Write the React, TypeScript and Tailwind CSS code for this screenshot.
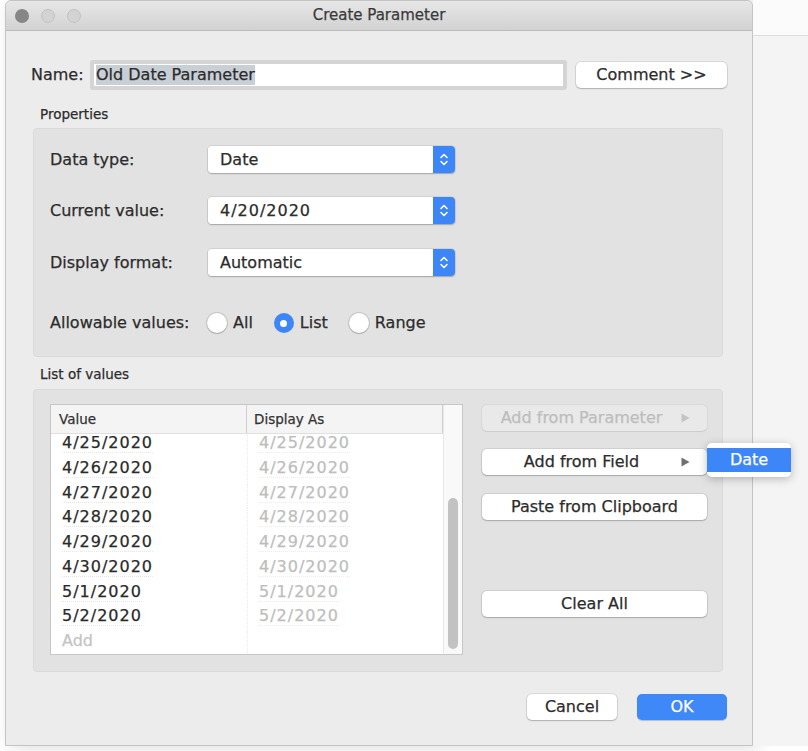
import { ReactNode } from "react";

const values = [
  "4/25/2020",
  "4/26/2020",
  "4/27/2020",
  "4/28/2020",
  "4/29/2020",
  "4/30/2020",
  "5/1/2020",
  "5/2/2020",
];

// blue up/down stepper on the right side of a popup select
function Stepper() {
  return (
    <div className="w-[22px] h-full bg-[#3d86f7] rounded-r-[4px] flex items-center justify-center">
      <svg width="10" height="17" viewBox="0 0 10 17" fill="none" stroke="white" strokeWidth="1.6" strokeLinecap="round" strokeLinejoin="round">
        <path d="M2 6.5 L5 3.5 L8 6.5" />
        <path d="M2 10.5 L5 13.5 L8 10.5" />
      </svg>
    </div>
  );
}

function Select({ children }: { children: ReactNode }) {
  return (
    <div className="flex w-[247px] h-[27px] rounded-[4px] shadow-[0_0_0_1px_rgba(0,0,0,0.07),0_1px_1.5px_rgba(0,0,0,0.22)]">
      <div className="flex-1 bg-white rounded-l-[4px] pl-[12px] flex items-center text-[16px] text-[#2c2c2c]">
        {children}
      </div>
      <Stepper />
    </div>
  );
}

function Radio({ label, checked = false }: { label: string; checked?: boolean }) {
  return (
    <div className="flex items-center gap-[6px]">
      {checked ? (
        <div className="w-[20px] h-[20px] rounded-full bg-[#3d86f7] flex items-center justify-center">
          <div className="w-[7px] h-[7px] rounded-full bg-white" />
        </div>
      ) : (
        <div className="w-[20px] h-[20px] rounded-full bg-white shadow-[0_0_0_1px_rgba(0,0,0,0.12),0_1px_1px_rgba(0,0,0,0.15)]" />
      )}
      <span className="text-[16px] text-[#2c2c2c]">{label}</span>
    </div>
  );
}

function Arrow({ muted = false }: { muted?: boolean }) {
  return (
    <svg width="9" height="10" viewBox="0 0 9 10" className="mr-[17px] shrink-0">
      <path d="M0.5 0.5 L8.5 5 L0.5 9.5 Z" fill={muted ? "#c4c4c4" : "#6f6f6f"} />
    </svg>
  );
}

function SideButton({ children, disabled = false, arrow = false }: { children: ReactNode; disabled?: boolean; arrow?: boolean }) {
  return (
    <div
      className={`w-[225px] h-[26px] rounded-[5px] flex items-center text-[16px] ${
        disabled
          ? "bg-[#e9e9e9] text-[#bdbdbd] shadow-[0_0_0_1px_rgba(0,0,0,0.04),0_1px_1px_rgba(0,0,0,0.06)]"
          : "bg-white text-[#2c2c2c] shadow-[0_0_0_1px_rgba(0,0,0,0.08),0_1px_1.5px_rgba(0,0,0,0.2)]"
      }`}
    >
      <span className="flex-1 text-center">{children}</span>
      {arrow && <Arrow muted={disabled} />}
    </div>
  );
}

function PushButton({ children, primary = false, className = "" }: { children: ReactNode; primary?: boolean; className?: string }) {
  return (
    <div
      className={`h-[26px] rounded-[5px] flex items-center justify-center text-[16px] ${
        primary
          ? "bg-[#3f88f8] text-white shadow-[0_1px_1px_rgba(0,0,0,0.2)]"
          : "bg-white text-[#2c2c2c] shadow-[0_0_0_1px_rgba(0,0,0,0.08),0_1px_1.5px_rgba(0,0,0,0.2)]"
      } ${className}`}
    >
      {children}
    </div>
  );
}

function ValueList() {
  return (
    <div className="w-[413px] h-[251px] border border-[#c6c6c6] bg-white flex">
      <div className="flex-1 flex flex-col min-w-0">
        <div className="h-[29px] shrink-0 bg-[#f4f4f4] border-b border-[#e0e0e0] flex text-[13.5px] text-[#333]">
          <div className="w-[196px] pl-[8px] flex items-center border-r border-[#cfcfcf]">Value</div>
          <div className="flex-1 pl-[7px] flex items-center border-r border-[#cfcfcf]">Display As</div>
        </div>
        <div className="flex-1 overflow-hidden">
          {values.map((v) => (
            <div key={v} className="h-[24.75px] flex text-[16px] leading-[18px] tracking-[1px]">
              <div className="w-[196px] pl-[11px] text-[#2a2a2a]">
                <span className="border-b border-dotted border-[#e6e6e6]">{v}</span>
              </div>
              <div className="flex-1 pl-[11px] text-[#bdbdbd] border-l border-dotted border-[#ececec]">
                <span className="border-b border-dotted border-[#ececec]">{v}</span>
              </div>
            </div>
          ))}
          <div className="h-[24.75px] flex text-[16px] leading-[18px]">
            <div className="w-[196px] pl-[11px] text-[#c4c4c4]">Add</div>
            <div className="flex-1 border-l border-dotted border-[#ececec]" />
          </div>
        </div>
      </div>
      <div className="w-[19px] shrink-0 border-l border-[#e8e8e8] bg-[#f9f9f9] flex flex-col items-center pt-[93px]">
        <div className="w-[10px] h-[151px] rounded-full bg-[#c2c2c2]" />
      </div>
    </div>
  );
}

function Window() {
  return (
    <div className="w-[748px] h-[746px] shrink-0 flex flex-col bg-[#ececec] border border-[#c4c4c4] rounded-t-[6px] shadow-[6px_0_18px_rgba(0,0,0,0.16)] text-[#2c2c2c]">
      {/* title bar */}
      <div className="h-[30px] shrink-0 relative flex items-center pl-[9px] gap-[12px] rounded-t-[6px] bg-gradient-to-b from-[#e7e7e7] to-[#d2d2d2] border-b border-[#bcbcbc]">
        <div className="w-[14px] h-[14px] rounded-full bg-[#868686]" />
        <div className="w-[14px] h-[14px] rounded-full bg-[#d3d3d3] border border-[#c2c2c2]" />
        <div className="w-[14px] h-[14px] rounded-full bg-[#d3d3d3] border border-[#c2c2c2]" />
        <div className="absolute inset-0 flex items-center justify-center text-[15px] text-[#3a3a3a]">
          Create Parameter
        </div>
      </div>

      {/* name row */}
      <div className="mt-[29px] pl-[25px] flex items-center">
        <span className="w-[59px] text-[16px]">Name:</span>
        <div className="w-[477px] h-[30px] rounded-[3px] bg-[#d4d4d4] p-[4px]">
          <div className="h-full bg-white flex items-center pl-[2px] text-[16px]">
            <span className="bg-[#c9cfd7] leading-[20px]">Old Date Parameter</span>
          </div>
        </div>
        <PushButton className="ml-[9px] w-[151px]">Comment &gt;&gt;</PushButton>
      </div>

      {/* properties */}
      <div className="mt-[16px] pl-[34px] h-[17px] leading-[17px] text-[13.5px]">Properties</div>
      <div className="mt-[5px] ml-[27px] w-[690px] h-[229px] shrink-0 rounded-[4px] bg-[#e2e2e2] border border-[#dadada] pt-[17px] pl-[16px]">
        <div className="flex flex-col gap-[24px]">
          <div className="flex items-center">
            <span className="w-[158px] text-[16px]">Data type:</span>
            <Select>Date</Select>
          </div>
          <div className="flex items-center">
            <span className="w-[158px] text-[16px]">Current value:</span>
            <Select>
              <span className="tracking-[1px]">4/20/2020</span>
            </Select>
          </div>
          <div className="flex items-center mt-[1px]">
            <span className="w-[158px] text-[16px]">Display format:</span>
            <Select>Automatic</Select>
          </div>
          <div className="flex items-center mt-[13px] h-[20px]">
            <span className="w-[157px] text-[16px]">Allowable values:</span>
            <div className="flex items-center gap-[21px]">
              <Radio label="All" />
              <Radio label="List" checked />
              <Radio label="Range" />
            </div>
          </div>
        </div>
      </div>

      {/* list of values */}
      <div className="mt-[9px] pl-[34px] h-[17px] leading-[17px] text-[13.5px]">List of values</div>
      <div className="mt-[6px] ml-[27px] w-[690px] h-[283px] shrink-0 rounded-[4px] bg-[#e2e2e2] border border-[#dadada] pt-[14px] pl-[16px] flex">
        <ValueList />
        <div className="ml-[19px] pt-[1px] flex flex-col">
          <SideButton disabled arrow>Add from Parameter</SideButton>
          <div className="relative mt-[18px]">
            <SideButton arrow>Add from Field</SideButton>
            <div className="absolute left-full top-[-6px] w-[84px] h-[34px] rounded-[5px] bg-white shadow-[0_2px_8px_rgba(0,0,0,0.25)] py-[5px]">
              <div className="h-[24px] bg-[#3d86f7] text-white text-[16px] flex items-center justify-center">Date</div>
            </div>
          </div>
          <div className="mt-[19px]">
            <SideButton>Paste from Clipboard</SideButton>
          </div>
          <div className="mt-[71px]">
            <SideButton>Clear All</SideButton>
          </div>
        </div>
      </div>

      {/* dialog buttons */}
      <div className="mt-[22px] pr-[25px] flex justify-end gap-[20px]">
        <PushButton className="w-[90px]">Cancel</PushButton>
        <PushButton primary className="w-[90px]">OK</PushButton>
      </div>
    </div>
  );
}

export default function App() {
  return (
    <div className="w-[808px] h-[751px] bg-white flex overflow-hidden font-['DejaVu_Sans',sans-serif] [-webkit-text-stroke:0.25px]">
      <div className="w-[5px] shrink-0" />
      <Window />
      <div className="flex-1 flex flex-col">
        <div className="h-[35px] bg-[#fbfbfb]" />
        <div className="h-[711px] border-t border-[#dedede] bg-[#f4f4f4]" />
      </div>
    </div>
  );
}
